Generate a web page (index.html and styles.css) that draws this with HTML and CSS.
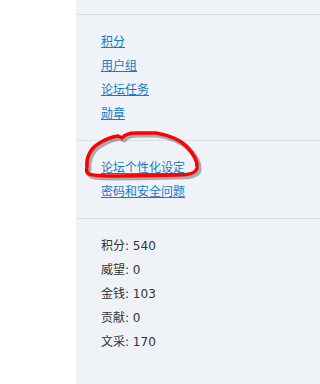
FILE: index.html
```html
<!DOCTYPE html>
<html lang="zh-CN">
<head>
<meta charset="utf-8">
<link rel="stylesheet" href="styles.css">
</head>
<body>
<div class="page">
  <div class="side"></div>
  <div class="panel">
    <div class="top"></div>
    <ul class="sec">
      <li><a href="#">积分</a></li>
      <li><a href="#">用户组</a></li>
      <li><a href="#">论坛任务</a></li>
      <li><a href="#">勋章</a></li>
    </ul>
    <ul class="sec">
      <li><a href="#">论坛个性化设定</a></li>
      <li><a href="#">密码和安全问题</a></li>
    </ul>
    <ul class="sec stats">
      <li>积分: 540</li>
      <li>威望: 0</li>
      <li>金钱: 103</li>
      <li>贡献: 0</li>
      <li>文采: 170</li>
    </ul>
  </div>
  <svg class="mark" width="234" height="384" viewBox="0 0 234 384">
    <path class="shadow" d="M89 169 C88 160 92 151 100 146 C106 142 112 139 120 138 L124 140 C127 136 131 135 138 135 L158 135 C170 137 180 140 188 148 C195 155 200 162 199 170 C198 175 192 177 180 177 L120 178 C105 178 95 178 91 176 C88 174 88 172 89 169 Z"/>
    <path class="stroke" d="M87 167 C86 158 90 149 98 144 C104 140 110 137 118 136 L122 138 C125 134 129 133 136 133 L156 133 C168 135 178 138 186 146 C193 153 198 160 197 168 C196 173 190 175 178 175 L118 176 C103 176 93 176 89 174 C86 172 86 170 87 167 Z"/>
  </svg>
</div>
</body>
</html>
```
FILE: styles.css
```css
html, body {
  margin: 0;
  padding: 0;
  background: #ffffff;
}
.page {
  position: relative;
  display: flex;
  width: 100%;
  min-height: 384px;
  height: 100vh;
  overflow: hidden;
  font-family: "DejaVu Sans", "Noto Sans CJK SC", sans-serif;
  font-size: 12px;
}
.side {
  width: 76px;
  flex: none;
  background: #ffffff;
}
.panel {
  flex: 1;
  background: #eff3f8;
}
.top {
  height: 14px;
  border-bottom: 1px solid #d9dfe7;
}
.sec {
  list-style: none;
  margin: 0;
  padding: 15px 0 14px 25px;
  border-bottom: 1px solid #d9dfe7;
}
.sec li {
  height: 24px;
  line-height: 24px;
  white-space: nowrap;
}
.sec a {
  color: #1a78c8;
  text-decoration: underline;
}
.stats {
  border-bottom: none;
  color: #333333;
}
.mark {
  position: absolute;
  left: 0;
  top: 0;
  pointer-events: none;
}
.mark path {
  fill: none;
  stroke-linejoin: round;
  stroke-linecap: round;
}
.mark .shadow {
  stroke: rgba(0, 0, 0, 0.3);
  stroke-width: 5;
}
.mark .stroke {
  stroke: #ff0000;
  stroke-width: 3.5;
}
```
